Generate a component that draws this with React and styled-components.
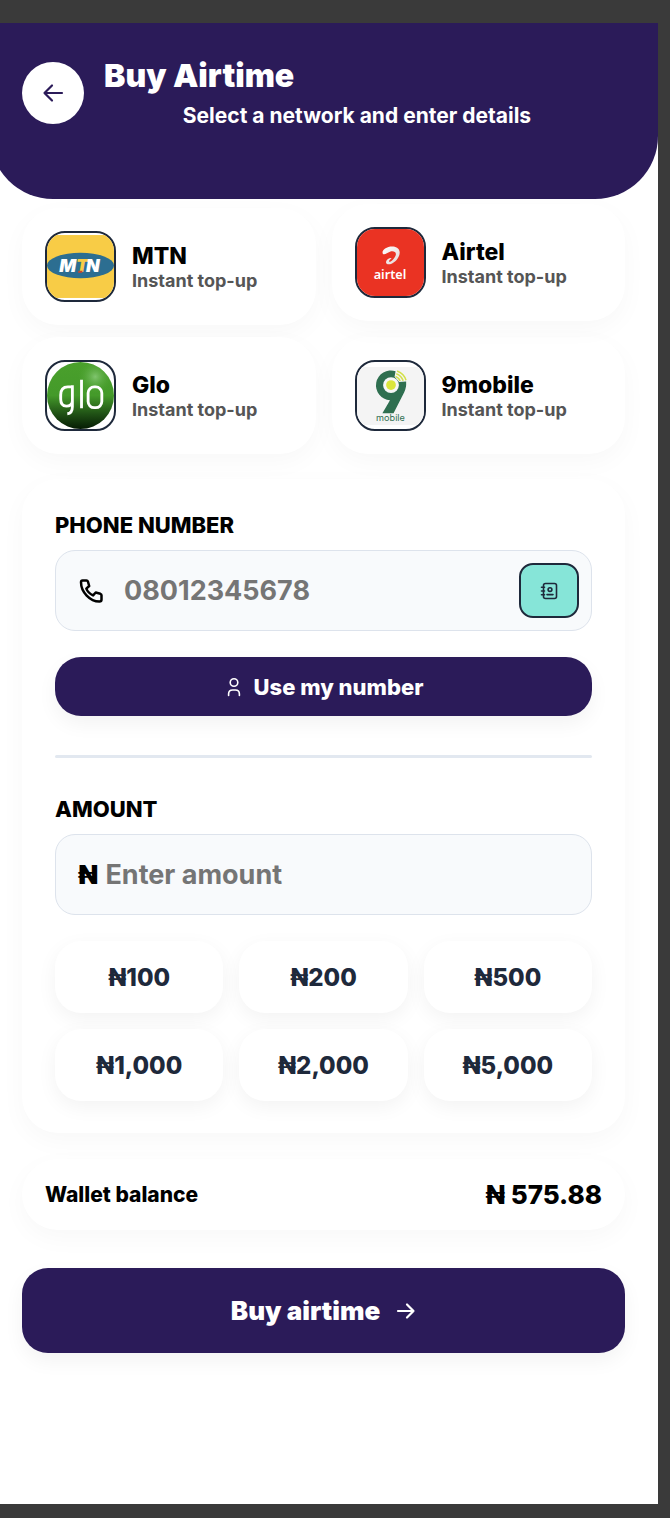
import React, { useState } from 'react';
import styled, { createGlobalStyle } from 'styled-components';

const networks = [
  { id: 'mtn', name: 'MTN' },
  { id: 'airtel', name: 'Airtel' },
  { id: 'glo', name: 'Glo' },
  { id: '9mobile', name: '9mobile' },
];

const amounts = [100, 200, 500, 1000, 2000, 5000];

const MtnLogo = () => (
  <svg viewBox="0 0 66 66" width="100%" height="100%" aria-hidden="true">
    <rect y="2" width="66" height="62" fill="#f8cc46" />
    <ellipse cx="33" cy="32" rx="33" ry="12.6" fill="#2c6e91" />
    <g fontFamily="Inter, sans-serif" fontWeight="900" fontStyle="italic" fontSize="17.5" fill="#fff">
      <text x="12" y="38.3">M</text>
      <text x="28.5" y="38.3" fill="#f8cc46">T</text>
      <text x="38.5" y="38.3">N</text>
    </g>
    <path d="M31 37.2h4l-.4 2h-4z" fill="#c8452f" />
  </svg>
);

const AirtelLogo = () => (
  <svg viewBox="0 0 66 66" width="100%" height="100%" aria-hidden="true">
    <defs>
      <linearGradient id="swirl" x1="0" y1="0" x2="1" y2="1">
        <stop offset="0" stopColor="#fff" />
        <stop offset="1" stopColor="#e3d6d4" />
      </linearGradient>
    </defs>
    <rect width="66" height="66" fill="#ea3323" />
    <path
      d="M25.6 24.6C24 22 27 19 31 17.8C36 16.4 41.3 18 42 22.3C42.6 27 38.5 32.5 33.5 34.4C30.5 35.5 28 34.5 28.7 32C29.3 29.8 32 28.4 34 28.7C33 29.5 31.3 31 31.6 32C32.3 33.3 37.800 28.800 38.300 25C38.600 22.300 35.500 21.400 32.500 22.300C30 23 27.500 25.800 25.600 24.600Z"
      fill="url(#swirl)"
    />
    <text x="32.5" y="49.5" textAnchor="middle" fontFamily="'Noto Sans', sans-serif" fontWeight="600" fontSize="12.5" fill="#fff">airtel</text>
  </svg>
);

const GloLogo = () => (
  <svg viewBox="0 0 66 66" width="100%" height="100%" aria-hidden="true">
    <defs>
      <linearGradient id="gloBase" x1="0" y1="0" x2="0" y2="1">
        <stop offset="0" stopColor="#4aa02c" />
        <stop offset="0.5" stopColor="#449a2a" />
        <stop offset="0.78" stopColor="#1f5015" />
        <stop offset="1" stopColor="#061c04" />
      </linearGradient>
      <radialGradient id="gloShine" cx="0.72" cy="0.22" r="0.26">
        <stop offset="0" stopColor="#8fcf80" stopOpacity="0.8" />
        <stop offset="1" stopColor="#4aa02c" stopOpacity="0" />
      </radialGradient>
    </defs>
    <circle cx="33" cy="33" r="33" fill="url(#gloBase)" />
    <circle cx="33" cy="33" r="33" fill="url(#gloShine)" />
    <g fill="none" stroke="#fff" strokeWidth="2.8">
      <path d="M25 24.5h-4.5q-7 0-7 8v4q0 7 5.5 7t6-5V23v21q0 6.500-5 7" />
      <path d="M34 17.5v28" />
      <rect x="40.5" y="24.5" width="13.5" height="20.5" rx="6" />
    </g>
  </svg>
);

const NineLogo = () => (
  <svg viewBox="0 0 66 66" width="100%" height="100%" aria-hidden="true">
    <rect y="5" width="66" height="57" fill="#f4f4f4" />
    <path d="M38 9.200A14.600 14.600 0 1 0 32.500 37.600L25 50.500h11L46.400 30Q48.800 25.500 48.400 19.200L41.500 19.800L37 14.500Z" fill="#2f6f50" />
    <circle cx="33.5" cy="22.7" r="7.800" fill="#f7f7f7" />
    <circle cx="33.5" cy="22.7" r="4.800" fill="#dbe63c" />
    <g fill="none" stroke="#d3e04a" strokeWidth="1.5">
      <path d="M39.500 8.800Q46.500 11.500 48.300 18" />
      <path d="M38.700 11.500Q43.800 13.500 45.500 18.400" />
      <path d="M38 14.200Q41.300 15.500 42.500 18.800" />
    </g>
    <text x="33" y="58.5" textAnchor="middle" fontFamily="Inter, sans-serif" fontSize="9" fill="#2f6f50">mobile</text>
  </svg>
);

const logos = { mtn: MtnLogo, airtel: AirtelLogo, glo: GloLogo, '9mobile': NineLogo };

const BackIcon = () => (
  <Stroke width="24" height="24" viewBox="0 0 24 24">
    <path d="M21 12H3.5M11 4.5L3.5 12l7.5 7.5" />
  </Stroke>
);

const NextIcon = () => (
  <Stroke width="20" height="20" viewBox="0 0 20 20">
    <path d="M2 10h15.5M11 3.5l6.5 6.5-6.5 6.5" />
  </Stroke>
);

const PhoneIcon = () => (
  <Stroke width="26" height="26" viewBox="0 0 26 26" $bold>
    <path d="M4.500 2.500h4q1 0 1.400 1l1.300 4.500-2.900 2.600q1.800 4.500 6.800 6.800l2.600-2.900 4.700 1.300q1.100.4 1.100 1.400v4.200q0 2-2 2C12 23.500 3 14 3 4.200q0-1.700 1.500-1.700z" />
  </Stroke>
);

const UserIcon = () => (
  <Stroke width="20" height="20" viewBox="0 0 20 20" $thin>
    <circle cx="10" cy="5.5" r="3.8" />
    <path d="M4.600 18.500v-1.500q0-4 4-4h2.800q4 0 4 4v1.500" />
  </Stroke>
);

const ContactsIcon = () => (
  <Stroke width="18" height="18" viewBox="0 0 18 18" $thin>
    <rect x="3.5" y="1.5" width="13" height="15" rx="2" />
    <circle cx="10" cy="7.6" r="1.9" />
    <path d="M7 12.6h6M1.5 5.2h3M1.5 9h3M1.5 12.8h3" />
  </Stroke>
);

const App = () => {
  const [phone, setPhone] = useState('');
  const [amount, setAmount] = useState('');

  return (
    <Screen>
      <GlobalStyle />
      <Page>
        <Header>
          <BackButton type="button" aria-label="Go back"><BackIcon /></BackButton>
          <HeaderCopy>
            <Title>Buy Airtime</Title>
            <Subtitle>Select a network and enter details</Subtitle>
          </HeaderCopy>
        </Header>

        <Content>
          <NetworkGrid>
            {networks.map(({ id, name }) => {
              const Logo = logos[id];
              return (
                <NetworkCard key={id} type="button" $raised={id === 'airtel'}>
                  <LogoBox><Logo /></LogoBox>
                  <NetworkText>
                    <NetworkName>{name}</NetworkName>
                    <NetworkHint>Instant top-up</NetworkHint>
                  </NetworkText>
                </NetworkCard>
              );
            })}
          </NetworkGrid>

          <FormCard>
            <Label htmlFor="phone">PHONE NUMBER</Label>
            <Field $gap="20px">
              <PhoneIcon />
              <Input id="phone" type="tel" placeholder="08012345678" value={phone} onChange={(e) => setPhone(e.target.value)} />
              <ContactsButton type="button" aria-label="Choose from contacts"><ContactsIcon /></ContactsButton>
            </Field>
            <MyNumberButton type="button" onClick={() => setPhone('08012345678')}>
              <UserIcon />
              Use my number
            </MyNumberButton>

            <Divider />

            <Label htmlFor="amount">AMOUNT</Label>
            <Field $gap="8px">
              <Naira>₦</Naira>
              <Input id="amount" inputMode="numeric" placeholder="Enter amount" value={amount} onChange={(e) => setAmount(e.target.value)} />
            </Field>
            <AmountGrid>
              {amounts.map((value) => (
                <AmountButton key={value} type="button" onClick={() => setAmount(String(value))}>
                  ₦{value.toLocaleString('en-US')}
                </AmountButton>
              ))}
            </AmountGrid>
          </FormCard>

          <Wallet>
            <WalletLabel>Wallet balance</WalletLabel>
            <WalletValue>₦ 575.88</WalletValue>
          </Wallet>

          <BuyButton type="button">
            Buy airtime
            <NextIcon />
          </BuyButton>
        </Content>
      </Page>
    </Screen>
  );
};

export default App;

const GlobalStyle = createGlobalStyle`
  * {
    box-sizing: border-box;
  }

  body {
    margin: 0;
    background: #3a3a3a;
    font-family: Inter, sans-serif;
    color: #000;
  }

  button,
  input {
    font-family: inherit;
  }

  button {
    cursor: pointer;
  }
`;

const Screen = styled.div`
  display: flex;
  min-height: 100vh;
  padding: 23px 12px 14px 0;
  background: #3a3a3a;
`;

const Page = styled.main`
  flex: 1;
  min-width: 0;
  overflow: hidden;
  background: #fff;
`;

const Header = styled.header`
  display: flex;
  align-items: center;
  gap: 20px;
  margin-left: -10px;
  padding: 31px 48px 68px 32px;
  border-radius: 0 0 63px 63px;
  background: #2b1b59;
  color: #fff;
`;

const BackButton = styled.button`
  display: grid;
  place-items: center;
  flex: none;
  width: 62px;
  height: 62px;
  padding: 0;
  border: 0;
  border-radius: 50%;
  background: #fff;
  color: #2b1b59;
`;

const HeaderCopy = styled.div`
  flex: 1;
`;

const Title = styled.h1`
  margin: 0 0 3px;
  font-size: 32px;
  line-height: 44px;
  font-weight: 900;
`;

const Subtitle = styled.p`
  margin: 0;
  font-size: 21px;
  line-height: 30px;
  font-weight: 700;
  text-align: center;
`;

const Content = styled.div`
  padding: 9px 33px 24px 22px;
`;

const NetworkGrid = styled.div`
  display: grid;
  grid-template-columns: 1fr 1fr;
  gap: 12px 16px;
`;

const NetworkCard = styled.button`
  display: flex;
  align-items: center;
  gap: 16px;
  padding: 23px;
  border: 0;
  border-radius: 36px;
  background: #fff;
  box-shadow: 0 8px 26px rgba(0, 0, 0, 0.03);
  color: #000;
  text-align: left;
  transform: ${({ $raised }) => ($raised ? 'translateY(-4px)' : 'none')};
`;

const LogoBox = styled.span`
  flex: none;
  width: 71px;
  height: 71px;
  overflow: hidden;
  border: 2px solid #1e293b;
  border-radius: 20px;
  background: #fff;

  svg {
    display: block;
  }
`;

const NetworkText = styled.span`
  display: grid;
  padding-top: 2px;
`;

const NetworkName = styled.span`
  font-size: 23px;
  line-height: 26px;
  font-weight: 800;
`;

const NetworkHint = styled.span`
  font-size: 18px;
  line-height: 23px;
  font-weight: 700;
  color: #555;
`;

const FormCard = styled.section`
  margin-top: 25px;
  padding: 33px 33px 32px;
  border-radius: 36px;
  background: #fff;
  box-shadow: 0 8px 26px rgba(0, 0, 0, 0.03);
`;

const Label = styled.label`
  display: block;
  margin-bottom: 12px;
  font-size: 22px;
  line-height: 26px;
  font-weight: 800;
`;

const Field = styled.div`
  display: flex;
  align-items: center;
  gap: ${({ $gap }) => $gap};
  height: 81px;
  padding: 0 12px 0 22px;
  border: 1px solid #dde3ec;
  border-radius: 20px;
  background: #f8fafc;
`;

const Input = styled.input`
  flex: 1;
  min-width: 0;
  padding: 0;
  border: 0;
  outline: 0;
  background: none;
  font-size: 27px;
  line-height: 36px;
  font-weight: 700;

  &::placeholder {
    color: #757575;
    opacity: 1;
  }
`;

const Naira = styled.span`
  font-size: 26px;
  line-height: 36px;
  font-weight: 900;
`;

const ContactsButton = styled.button`
  display: grid;
  place-items: center;
  width: 60px;
  height: 55px;
  padding: 0;
  border: 2px solid #1e293b;
  border-radius: 14px;
  background: #86e5d8;
  color: #1e293b;
`;

const MyNumberButton = styled.button`
  display: flex;
  align-items: center;
  justify-content: center;
  gap: 10px;
  width: 100%;
  height: 59px;
  margin-top: 26px;
  border: 0;
  border-radius: 26px;
  background: #2b1b59;
  box-shadow: 0 8px 20px rgba(0, 0, 0, 0.05);
  color: #fff;
  font-size: 22px;
  font-weight: 800;
`;

const Divider = styled.hr`
  height: 3px;
  margin: 39px 0 38px;
  border: 0;
  border-radius: 2px;
  background: #e2e8f0;
`;

const AmountGrid = styled.div`
  display: grid;
  grid-template-columns: repeat(3, 1fr);
  gap: 16px;
  margin-top: 26px;
`;

const AmountButton = styled.button`
  height: 72px;
  padding: 0;
  border: 0;
  border-radius: 26px;
  background: #fff;
  box-shadow: 0 6px 20px rgba(0, 0, 0, 0.05);
  color: #1e293b;
  font-size: 24px;
  font-weight: 800;
`;

const Wallet = styled.section`
  display: flex;
  align-items: center;
  justify-content: space-between;
  height: 71px;
  margin-top: 26px;
  padding: 0 23px;
  border-radius: 36px;
  background: #fff;
  box-shadow: 0 8px 26px rgba(0, 0, 0, 0.03);
`;

const WalletLabel = styled.span`
  font-size: 21px;
  font-weight: 800;
`;

const WalletValue = styled.strong`
  font-size: 26px;
  font-weight: 800;
`;

const BuyButton = styled.button`
  display: flex;
  align-items: center;
  justify-content: center;
  gap: 16px;
  width: 100%;
  height: 85px;
  margin-top: 38px;
  border: 0;
  border-radius: 26px;
  background: #2b1b59;
  box-shadow: 0 8px 20px rgba(0, 0, 0, 0.05);
  color: #fff;
  font-size: 26px;
  font-weight: 900;
`;

const Stroke = styled.svg`
  flex: none;
  fill: none;
  stroke: currentColor;
  stroke-width: ${({ $thin, $bold }) => ($thin ? '1.6px' : $bold ? '2.5px' : '2.2px')};
  stroke-linecap: round;
  stroke-linejoin: round;
`;
